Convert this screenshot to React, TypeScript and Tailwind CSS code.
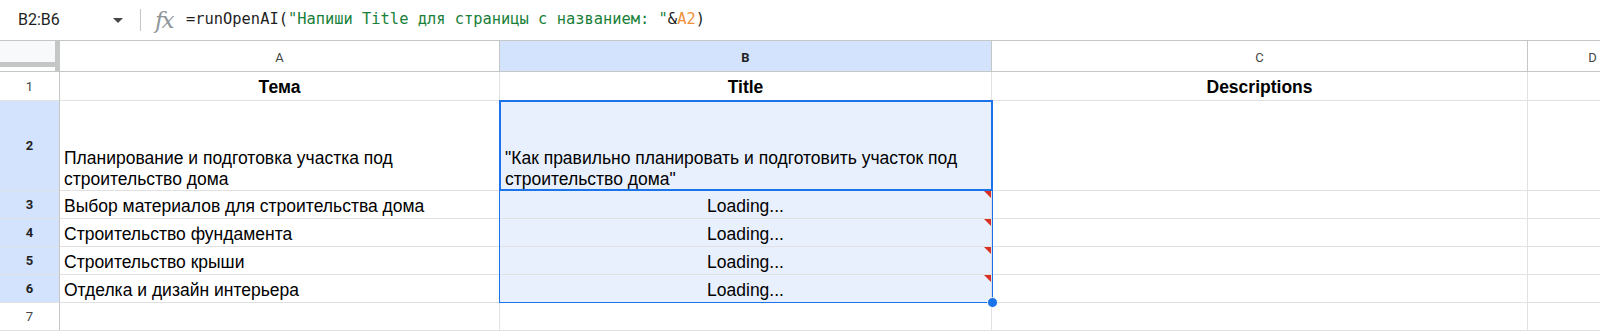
import React from "react";

const rowsA = [
  "Выбор материалов для строительства дома",
  "Строительство фундамента",
  "Строительство крыши",
  "Отделка и дизайн интерьера",
];

function RowHead({ n, sel }: { n: number; sel?: boolean }) {
  return (
    <div
      className={
        "flex items-center justify-center border-r border-b border-r-[#c4c7c5] border-b-[#e1e1e1] text-[13px] font-['Roboto',sans-serif] " +
        (sel ? "bg-[#d3e3fd] font-bold text-[#1f1f1f]" : "bg-white text-[#444746]")
      }
    >
      {n}
    </div>
  );
}

function Cell({
  children,
  className = "",
}: {
  children?: React.ReactNode;
  className?: string;
}) {
  return (
    <div className={"relative border-r border-b border-[#e1e1e1] " + className}>
      {children}
    </div>
  );
}

function Tri() {
  return (
    <div className="absolute top-0 right-0 h-0 w-0 border-t-[7px] border-l-[7px] border-t-[#d93025] border-l-transparent" />
  );
}

export default function App() {
  return (
    <div className="w-[1600px] h-[332px] overflow-hidden bg-white font-['Liberation_Sans',Arial,sans-serif] text-black">
      {/* Formula bar */}
      <div className="flex h-[41px] items-center border-b border-[#c4c7c5] bg-white">
        <div className="flex w-[130px] items-center pl-[18px] font-['Roboto',sans-serif] text-[16px] text-[#1f1f1f]">
          <span className="w-[95px]">B2:B6</span>
          <svg width="10" height="5" viewBox="0 0 10 5">
            <path d="M0 0 L10 0 L5 5 Z" fill="#444746" />
          </svg>
        </div>
        <div className="ml-[10px] h-[22px] w-px bg-[#c4c7c5]" />
        <div className="ml-[14px] w-[31px] font-['DejaVu_Serif',serif] text-[23px] italic leading-none text-[#90959a] tracking-[-2px]">
          fx
        </div>
        <div className="font-['DejaVu_Sans_Mono',monospace] text-[15.4px] text-[#1f1f1f] whitespace-pre">
          =runOpenAI(<span className="text-[#188038]">"Напиши Title для страницы с названием: "</span>&amp;<span className="text-[#f0903a]">A2</span>)
        </div>
      </div>

      {/* Grid */}
      <div className="relative">
        <div className="grid grid-cols-[60px_440px_492px_536px_130px] grid-rows-[31px_29px_90px_28px_28px_28px_28px_28px] text-[17.5px] leading-[21px]">
          {/* Header row */}
          <div className="flex border-r border-b border-[#c4c7c5]">
            <div className="flex w-[55px] flex-col">
              <div className="h-[21px] bg-[#f8f9fa]" />
              <div className="h-[5px] bg-[#c4c7c5]" />
            </div>
            <div className="w-[4px] bg-[#c4c7c5]" />
          </div>
          <div className="flex items-center justify-center border-r border-b border-[#c4c7c5] pt-[2px] font-['Roboto',sans-serif] text-[13px] text-[#444746]">
            A
          </div>
          <div className="flex items-center justify-center border-r border-b border-[#c4c7c5] bg-[#d3e3fd] pt-[2px] font-['Roboto',sans-serif] text-[13px] font-bold text-[#1f1f1f]">
            B
          </div>
          <div className="flex items-center justify-center border-r border-b border-[#c4c7c5] pt-[2px] font-['Roboto',sans-serif] text-[13px] text-[#444746]">
            C
          </div>
          <div className="flex items-center justify-center border-r border-b border-[#c4c7c5] pt-[2px] font-['Roboto',sans-serif] text-[13px] text-[#444746]">
            D
          </div>

          {/* Row 1 */}
          <RowHead n={1} />
          <Cell className="flex items-end justify-center pb-[2px] font-bold">Тема</Cell>
          <Cell className="flex items-end justify-center pb-[2px] font-bold">Title</Cell>
          <Cell className="flex items-end justify-center pb-[2px] font-bold">Descriptions</Cell>
          <Cell />

          {/* Row 2 */}
          <RowHead n={2} sel />
          <Cell className="flex items-end px-[4px] pb-[0px]">
            <div>Планирование и подготовка участка под строительство дома</div>
          </Cell>
          <Cell className="flex items-end bg-[#e8f0fe] px-[5px] pb-[0px]">
            <div>"Как правильно планировать и подготовить участок под строительство дома"</div>
          </Cell>
          <Cell />
          <Cell />

          {/* Rows 3-6 */}
          {rowsA.map((t, i) => (
            <React.Fragment key={t}>
              <RowHead n={i + 3} sel />
              <Cell className="flex items-end px-[4px] pb-[1px]">{t}</Cell>
              <Cell className="flex items-end justify-center bg-[#e8f0fe] pb-[1px]">
                Loading...
                <Tri />
              </Cell>
              <Cell />
              <Cell />
            </React.Fragment>
          ))}

          {/* Row 7 */}
          <RowHead n={7} />
          <Cell />
          <Cell />
          <Cell />
          <Cell />
        </div>

        {/* Selection range overlay */}
        <div className="pointer-events-none absolute left-[499px] top-[59px] h-[203px] w-[494px] border border-[#1a73e8]" />
        {/* Active cell */}
        <div className="pointer-events-none absolute left-[499px] top-[59px] h-[91px] w-[494px] border-2 border-[#1a73e8]" />
        {/* Fill handle */}
        <div className="pointer-events-none absolute left-[987px] top-[256px] h-[11px] w-[11px] rounded-full border border-white bg-[#1a73e8]" />
      </div>
    </div>
  );
}
